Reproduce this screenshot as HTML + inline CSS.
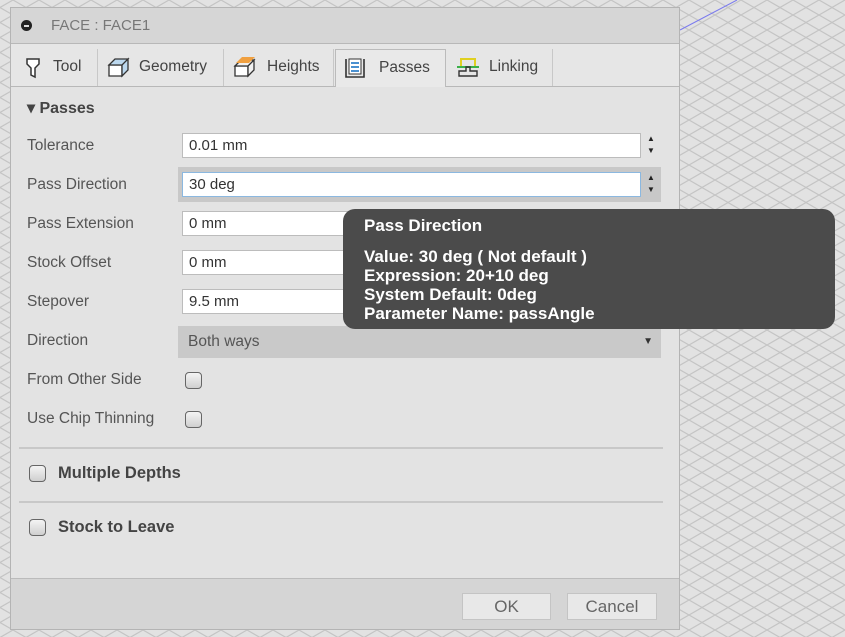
<!DOCTYPE html>
<html><head><style>
body{margin:0;width:845px;height:637px;overflow:hidden;font-family:"Liberation Sans",sans-serif;position:relative;background:#dedede}
.bg{position:absolute;left:0;top:0}
.dlg{position:absolute;left:10px;top:7px;width:670px;height:623px;background:#e3e3e3;border:1px solid #b4b4b4;box-sizing:border-box}
.title{position:absolute;left:0;top:0;right:0;height:35px;background:#d6d6d6;border-bottom:1px solid #b8b8b8}
.title .dot{position:absolute;left:10px;top:12px;width:11px;height:11px;border-radius:50%;background:#222}
.title .dot:after{content:"";position:absolute;left:3px;top:5px;width:5px;height:1.5px;background:#ddd}
.title span{position:absolute;left:40px;top:9px;font-size:15px;color:#777}
.tabs{position:absolute;left:0;top:36px;right:0;height:42px;background:#e6e6e6;border-bottom:1px solid #b8b8b8}
.tab{position:absolute;top:5px;height:37px;font-size:15.5px;color:#444;line-height:35px}
.tab.sep{border-right:1px solid #c8c8c8}
.tab.act{background:#e9e9e9;border:1px solid #bbb;border-bottom:none;height:38px;box-sizing:border-box}
.sec{position:absolute;left:16px;font-size:16px;font-weight:bold;color:#444}
.lbl{position:absolute;left:16px;font-size:15.5px;color:#555}
.inp{position:absolute;left:171px;width:459px;height:25px;background:#fff;border:1px solid #bcbcbc;box-sizing:border-box;font-size:15px;color:#333;padding:3px 6px;line-height:17px}
.spin{position:absolute;left:631px;width:18px;font-size:8px;color:#222;text-align:center;line-height:12px}
.cb{position:absolute;width:17px;height:17px;border:1.5px solid #666;border-radius:4px;box-sizing:border-box;background:linear-gradient(#f4f4f4,#cfcfcf)}
.hr{position:absolute;left:8px;width:644px;height:2px;background:#c8c8c8}
.foot{position:absolute;left:0;right:0;top:570px;bottom:0;background:#d5d5d5;border-top:1px solid #bbb}
.btn{position:absolute;top:14px;height:27px;background:#e8e8e8;border:1px solid #c4c4c4;box-sizing:border-box;font-size:17px;color:#666;text-align:center;line-height:25px}
.tip{position:absolute;left:343px;top:209px;width:492px;height:120px;background:#4b4b4b;border-radius:12px;color:#fff;font-weight:bold;font-size:17px}
</style></head><body>
<svg class="bg" width="845" height="637"><defs><pattern id="p" width="26" height="15" patternUnits="userSpaceOnUse"><path d="M0 7.5L13 0L26 7.5L13 15Z" fill="none" stroke="#c4c4c4" stroke-width="1.2"/></pattern></defs><rect width="845" height="637" fill="#e2e2e2"/><rect width="845" height="637" fill="url(#p)"/><line x1="680" y1="30" x2="737" y2="0" stroke="#7a7aee" stroke-width="1"/></svg>
<div class="dlg">
<div class="title"><div class="dot"></div><span>FACE : FACE1</span></div>
<div class="tabs">
 <div class="tab sep" style="left:6px;width:80px"><svg style="position:absolute;left:8px;top:8px" width="16" height="22"><path d="M2 2h12v5l-4 4v9l-4-2v-7l-4-4z" fill="#fff" stroke="#333" stroke-width="1.5"/></svg><span style="position:absolute;left:36px">Tool</span></div>
 <div class="tab sep" style="left:88px;width:124px"><svg style="position:absolute;left:8px;top:7px" width="24" height="22"><path d="M2 9h13v11H2z" fill="#fff" stroke="#333" stroke-width="1.3"/><path d="M2 9l6-6h13l-6 6zM15 9l6-6v11l-6 6z" fill="#bcd8ee" stroke="#333" stroke-width="1.3"/></svg><span style="position:absolute;left:40px">Geometry</span></div>
 <div class="tab sep" style="left:214px;width:108px"><svg style="position:absolute;left:8px;top:7px" width="24" height="22"><path d="M2 10h13v10H2z" fill="#fff" stroke="#333" stroke-width="1.3"/><path d="M2 10l6-6h13l-6 6zM15 10l6-6v10l-6 6z" fill="#f0f0f0" stroke="#333" stroke-width="1.3"/><path d="M3 7l6-6h13l-6 6z" fill="#f0a040"/></svg><span style="position:absolute;left:42px">Heights</span></div>
 <div class="tab act" style="left:324px;width:111px"><svg style="position:absolute;left:8px;top:8px" width="22" height="20"><path d="M2 1v18h18V1" fill="none" stroke="#333" stroke-width="1.6"/><path d="M5 1h12v15H5z" fill="#fff" stroke="#333"/><path d="M7 5h8M7 9h8M7 13h8" stroke="#4a90d0" stroke-width="2"/></svg><span style="position:absolute;left:43px">Passes</span></div>
 <div class="tab sep" style="left:437px;width:104px"><svg style="position:absolute;left:8px;top:8px" width="24" height="22"><path d="M5 9V2h14v7" fill="none" stroke="#e0d020" stroke-width="2"/><path d="M1 10h22" stroke="#3cb04a" stroke-width="2"/><path d="M3 19v-5h7v-4h4v4h7v5z" fill="none" stroke="#333" stroke-width="1.4"/></svg><span style="position:absolute;left:41px">Linking</span></div>
</div>
<div class="sec" style="top:90px">▾ Passes</div>
<div class="lbl" style="top:129px">Tolerance</div>
<div class="inp" style="top:125px">0.01 mm</div><div class="spin" style="top:125px">▲<br>▼</div>
<div style="position:absolute;left:167px;top:159px;width:483px;height:35px;background:#c8c8c8"></div>
<div class="lbl" style="top:168px">Pass Direction</div>
<div class="inp" style="top:164px;border-color:#8bb8e0">30 deg</div><div class="spin" style="top:164px">▲<br>▼</div>
<div class="lbl" style="top:207px">Pass Extension</div><div class="inp" style="top:203px">0 mm</div>
<div class="lbl" style="top:246px">Stock Offset</div><div class="inp" style="top:242px">0 mm</div>
<div class="lbl" style="top:285px">Stepover</div><div class="inp" style="top:281px">9.5 mm</div>
<div class="lbl" style="top:324px">Direction</div>
<div style="position:absolute;left:167px;top:318px;width:483px;height:32px;background:#c9c9c9;font-size:15.5px;color:#555;line-height:32px;padding-left:10px;box-sizing:border-box">Both ways<span style="position:absolute;right:8px;font-size:10px;color:#333">▼</span></div>
<div class="lbl" style="top:363px">From Other Side</div><div class="cb" style="left:174px;top:364px"></div>
<div class="lbl" style="top:402px">Use Chip Thinning</div><div class="cb" style="left:174px;top:403px"></div>
<div class="hr" style="top:439px"></div>
<div class="cb" style="left:18px;top:457px"></div><div class="sec" style="left:47px;top:456px;font-size:16.5px">Multiple Depths</div>
<div class="hr" style="top:493px"></div>
<div class="cb" style="left:18px;top:511px"></div><div class="sec" style="left:47px;top:510px;font-size:16.5px">Stock to Leave</div>
<div class="foot"><div class="btn" style="left:451px;width:89px">OK</div><div class="btn" style="left:556px;width:90px">Cancel</div></div>
</div>
<div class="tip"><div style="position:absolute;left:21px;top:7px">Pass Direction</div><div style="position:absolute;left:21px;top:38px;line-height:19px">Value: 30 deg ( Not default )<br>Expression: 20+10 deg<br>System Default: 0deg<br>Parameter Name: passAngle</div></div>
</body></html>
